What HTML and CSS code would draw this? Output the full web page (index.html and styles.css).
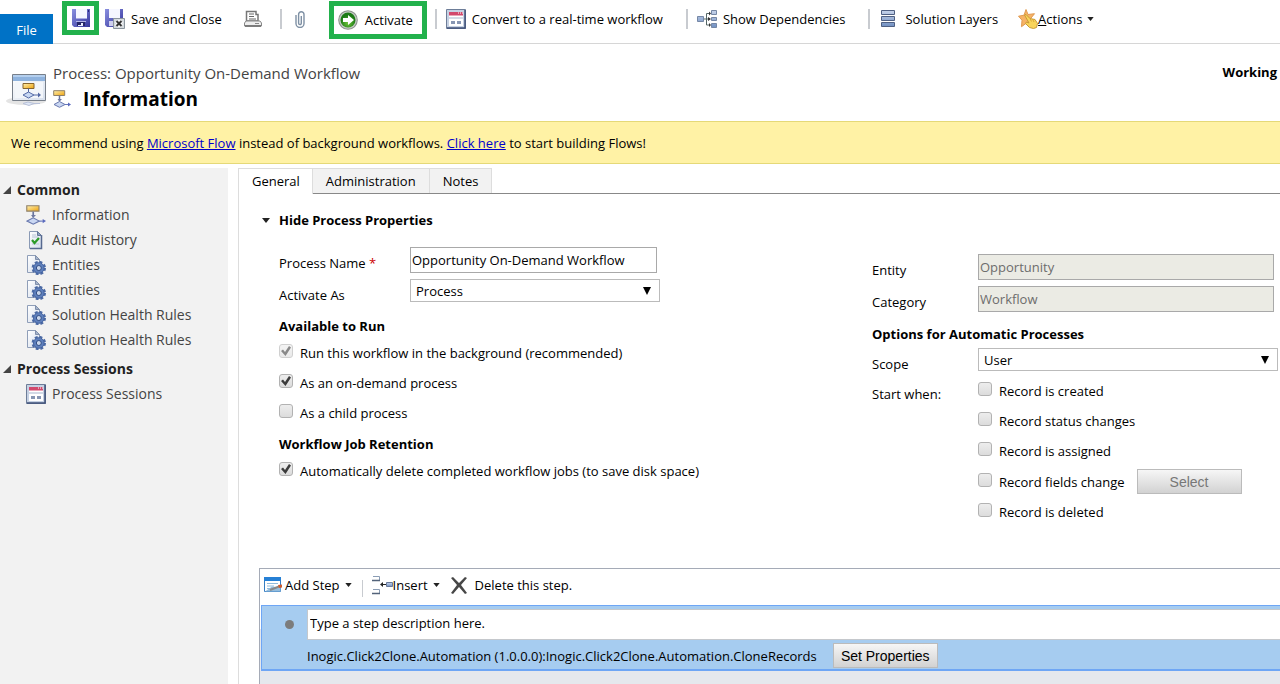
FILE: index.html
```html
<!DOCTYPE html>
<html lang="en">
<head>
<meta charset="utf-8">
<title>Process: Opportunity On-Demand Workflow</title>
<link rel="stylesheet" href="styles.css">
</head>
<body>
<svg class="sprite" aria-hidden="true">
  <defs>
    <linearGradient id="g-blue" x2="1" y2="1"><stop stop-color="#8a90e0"/><stop offset="1" stop-color="#35359c"/></linearGradient>
    <linearGradient id="g-gold" x2="1" y2="1"><stop stop-color="#fff0b0"/><stop offset="1" stop-color="#eda20c"/></linearGradient>
    <linearGradient id="g-page" x2="1" y2="1"><stop stop-color="#fff"/><stop offset="1" stop-color="#d5deec"/></linearGradient>
    <linearGradient id="g-bar" x2="0" y2="1"><stop stop-color="#c6d3ea"/><stop offset="1" stop-color="#7190c2"/></linearGradient>
    <radialGradient id="g-green" cy=".7"><stop stop-color="#6fc63a"/><stop offset="1" stop-color="#1c7a16"/></radialGradient>
    <symbol id="disk" viewBox="0 0 18 18">
      <path d="M0 0h18v18H2l-2-2z" fill="url(#g-blue)"/><path d="M4 0h11v9H4z" fill="#f5f6ff"/><path d="M4 9h11v1H4z" fill="#a9abe3"/>
      <path d="M5 12h8v5H5z" fill="#26266a"/><path d="M6 16h3v-2h2v3H6z" fill="#eceeff"/><path d="M4 12h10v1H4z" fill="#b5b7e8"/><path d="M16 1h1v2h-1z" fill="#25257c"/>
    </symbol>
    <symbol id="disk-close" viewBox="0 0 20 20">
      <path d="M0 0h18v18H2l-2-2z" fill="url(#g-blue)"/><path d="M4 0h11v9H4z" fill="#f5f6ff"/><path d="M4 12h8v5H4z" fill="#cfd0f0"/>
      <path d="M8.500 9.500h11v10h-11z" fill="#d5dade" stroke="#8a949c"/><path d="M11.500 12l5 5m0-5l-5 5" stroke="#fff" stroke-width="4"/><path d="M11.500 12l5 5m0-5l-5 5" stroke="#333" stroke-width="2"/>
    </symbol>
    <symbol id="printer" viewBox="0 0 18 17">
      <path d="M2.500 1h9.500v3h2v6.500H2.500z" fill="#fff" stroke="#777" stroke-width="1.500"/><path d="M5 3.500h5m-5 2.500h5m-5 2.500h7" stroke="#666" stroke-width="1.200"/>
      <path d="M2 10.500h14l1.500 2v3H.5v-3z" fill="#eee" stroke="#888"/><path d="M1 15.500h16" stroke="#666" stroke-width="1.500"/><path d="M11 13h4" stroke="#888"/>
    </symbol>
    <symbol id="clip" viewBox="0 0 10 17">
      <path d="M1 4v8.500a3.500 3.500 0 0 0 8 0V3.500a2.600 2.600 0 0 0-5.400 0v8.700a1.300 1.300 0 0 0 2.700 0V5" fill="none" stroke="#7e90a4" stroke-width="1.400"/>
    </symbol>
    <symbol id="go" viewBox="0 0 20 20">
      <circle cx="10" cy="10" r="9.800" fill="#8b918b"/><circle cx="10" cy="10" r="8.800" fill="#c2c9c2"/><circle cx="10" cy="10" r="7.500" fill="url(#g-green)"/>
      <path d="M5 8h5V5l6 5-6 5v-3H5z" fill="#fff"/>
    </symbol>
    <symbol id="form" viewBox="0 0 20 20">
      <path d="M.5.5h19v19H.5z" fill="#c6d1e3" stroke="#6d7d98"/><path d="M19 1v18H1" fill="none" stroke="#40527a" stroke-width="1.500"/>
      <path d="M3 3h14v14H3z" fill="#fff"/><path d="M3 3h14v3.500H3z" fill="#d2486c"/><path d="M12 4h1m1 0h1m1 0h1" stroke="#fff"/><path d="M3 9h14" stroke="#d3dae6" stroke-width="2"/>
      <path d="M5 12h4v3H5zm6 0h4v3h-4z" fill="#8796b3"/>
    </symbol>
    <symbol id="deps" viewBox="0 0 20 18">
      <g fill="url(#g-bar)" stroke="#7587a5"><path d="M.5 6.500h6v5h-6zM14.500.5h5v4h-5zM14.500 7.500h5v3h-5zM14.500 13.500h5v4h-5z"/></g>
      <path d="M7 9h6M9.500 9V3.500h3M9.500 9v6h3" fill="none" stroke="#566"/><path d="M11 7l3 2-3 2zM12 1.500l2 2-2 2zM12 13l2 2-2 2z" fill="#333"/>
    </symbol>
    <symbol id="layers" viewBox="0 0 14 18"><g fill="url(#g-bar)" stroke="#4f6083"><path d="M.5.5h13v4H.5zM.5 6.500h13v4H.5zM.5 12.500h13v4H.5z"/></g></symbol>
    <symbol id="star" viewBox="0 0 20 20">
      <path d="M8 .5l2 5 6.500-.8-4 5 3 6-6.500-2-5.500 4 .5-6.500-3.500-4 5.500-1z" fill="#f6b366" stroke="#e09a52"/>
      <path d="M6.500 6l1.500-.5 4 4 5 1 2.500 4-1 4-3 1-4-1-4-4 1-1.500 2.500 1z" fill="#f8d45b" stroke="#c99a35"/><path d="M12 9.500l1.500 3m1-2.500l1.500 3" stroke="#d8a838" fill="none"/>
    </symbol>
    <symbol id="flow" viewBox="0 0 18 18">
      <path d="M.7.7h11v4.800H.7z" fill="url(#g-gold)" stroke="#8f8068"/><path d="M6.500 6v5" stroke="#69749d" stroke-width="1.500"/>
      <path d="M1 14.500l5.500-3 5.500 3-5.500 2.800z" fill="#cad7f2" stroke="#6878ae"/><path d="M12 14.500h4" stroke="#6878bd"/><path d="M15 12.500l3 2-3 2z" fill="#5969bd"/><path d="M4.500 9l2 2.500L9 9z" fill="#6e78a0"/>
    </symbol>
    <symbol id="process" viewBox="0 0 40 34">
      <ellipse cx="20" cy="27" rx="20" ry="4" fill="#e4e4e4"/><path d="M6.500.5h33v26h-33z" fill="url(#g-page)" stroke="#777f8a"/><path d="M7 1h32v6H7z" fill="#8fb3de"/><path d="M7 1h32v2H7z" fill="#b4cfee"/>
      <path d="M9 8h28v16H9z" fill="#f3f6fa"/><path d="M17 9.500h11v5H17z" fill="url(#g-gold)" stroke="#86652e"/><path d="M22.500 14.500v4" stroke="#53679d"/>
      <path d="M17 21l5.500-3 5.500 3-5.500 3z" fill="#c8d8f3" stroke="#5369a5"/><path d="M28 21h5" stroke="#5369a5"/><path d="M32 18.500l3 2.500-3 2.500z" fill="#5369a5"/>
      <path d="M17 29.500l5-1.500 6 1.500-5 2zm11 0h6" fill="#dfe7f5" stroke="#b8c1d9"/>
    </symbol>
    <symbol id="audit" viewBox="0 0 20 20">
      <path d="M3.500 1.500h8l4 4v13h-12z" fill="url(#g-page)" stroke="#8a9ab5"/><path d="M15.500 5v13.500H4" fill="none" stroke="#56698f" stroke-width="1.500"/><path d="M11.500 1.500v4h4z" fill="#8fa1bd" stroke="#65789b"/><path d="M6 5h4M6 7h6M6 14h7" stroke="#b9c5d7"/>
      <path d="M6 10l2.500 3L13 8" fill="none" stroke="#2c9b28" stroke-width="2.200"/>
    </symbol>
    <symbol id="entity" viewBox="0 0 20 20">
      <path d="M1.500.5h8l4 4v13h-12z" fill="url(#g-page)" stroke="#8f9eb8"/><path d="M9.500.5v4h4z" fill="#a7b5cb" stroke="#8090ad"/>
      <circle cx="12.800" cy="13" r="6.200" fill="none" stroke="#4d6ba5" stroke-width="2" stroke-dasharray="2.900 1.970"/><circle cx="12.800" cy="13" r="5.300" fill="#5f80bd" stroke="#41619f"/><circle cx="12.800" cy="13" r="2.500" fill="#c9d6ec" stroke="#2f4c83"/>
    </symbol>
    <symbol id="step" viewBox="0 0 18 16">
      <path d="M.5.5h16v14H.5z" fill="#fff" stroke="#347dc2"/><path d="M0 0h17v4H0z" fill="#2680d5"/><path d="M3 6.500h11M3 9h7M3 11.500h4" stroke="#8fbbdc"/><path d="M1 14.500l7-5 8.500 1v4z" fill="#95bddd"/>
      <path d="M6 13l9-3.500" stroke="#888" stroke-width="2"/><path d="M14 8l4-.5v3l-3 .5z" fill="#cf5c2e"/>
    </symbol>
    <symbol id="insert" viewBox="0 0 21 20">
      <path d="M1 1.500h6.500v4H1M1 14.500h6.500v4H1" fill="#fff" stroke="#8a9cb4"/><path d="M0 5.500h8M0 18.500h8" stroke="#53637a" stroke-width="1.500"/><path d="M14.500 7.500h6v4h-6z" fill="url(#g-bar)" stroke="#68799a"/><path d="M9 9.500h5" stroke="#222"/><path d="M8 9.500l3-2.500v5z" fill="#222"/>
    </symbol>
    <symbol id="cross" viewBox="0 0 16 17"><path d="M0 1l2-1 6 6 6-6 2 1-6 7 6 8-2 1-6-7-6 7-2-1 6-8z" fill="#474747"/></symbol>
    <symbol id="down" viewBox="0 0 8 5"><path d="M0 0h8L4 5z" fill="#222"/></symbol>
    <symbol id="fold" viewBox="0 0 8 8"><path d="M8 0v8H0z" fill="#444"/></symbol>
    <symbol id="select-arrow" viewBox="0 0 8 8"><path d="M0 0h8L4 8z" fill="#000"/></symbol>
  </defs>
</svg>

<header class="ribbon">
  <button class="file-tab">File</button>
  <div class="tools">
    <button class="tool marked save" aria-label="Save"><svg class="i18"><use href="#disk"/></svg></button>
    <button class="tool save-close"><svg class="i20"><use href="#disk-close"/></svg>Save and Close</button>
    <button class="tool print" aria-label="Print"><svg class="i18"><use href="#printer"/></svg></button>
    <span class="rule"></span>
    <button class="tool attach" aria-label="Attach"><svg class="i-clip"><use href="#clip"/></svg></button>
    <span class="rule tight"></span>
    <button class="tool marked activate"><svg class="i20"><use href="#go"/></svg>Activate</button>
    <span class="rule"></span>
    <button class="tool convert"><svg class="i20"><use href="#form"/></svg>Convert to a real-time workflow</button>
    <span class="rule"></span>
    <button class="tool deps"><svg class="i20"><use href="#deps"/></svg>Show Dependencies</button>
    <span class="rule"></span>
    <button class="tool layers"><svg class="i-layers"><use href="#layers"/></svg>Solution Layers</button>
    <button class="tool actions"><svg class="i20"><use href="#star"/></svg><span><u>A</u>ctions</span><svg class="i-down"><use href="#down"/></svg></button>
  </div>
</header>

<section class="title-bar">
  <svg class="i-process"><use href="#process"/></svg>
  <div class="titles">
    <div class="record">Process: Opportunity On-Demand Workflow</div>
    <h1 class="page-title"><svg class="i18"><use href="#flow"/></svg>Information</h1>
  </div>
  <div class="status">Working</div>
</section>

<div class="notice">We recommend using <a href="#flow-home">Microsoft Flow</a> instead of background workflows. <a href="#flow-start">Click here</a> to start building Flows!</div>

<div class="body">
  <nav class="sidebar">
    <h2 class="nav-head"><svg class="i-fold"><use href="#fold"/></svg>Common</h2>
    <a class="nav-link" href="#information"><svg class="i20"><use href="#flow"/></svg>Information</a>
    <a class="nav-link" href="#audit-history"><svg class="i20"><use href="#audit"/></svg>Audit History</a>
    <a class="nav-link" href="#entities"><svg class="i20"><use href="#entity"/></svg>Entities</a>
    <a class="nav-link" href="#entities-2"><svg class="i20"><use href="#entity"/></svg>Entities</a>
    <a class="nav-link" href="#health"><svg class="i20"><use href="#entity"/></svg>Solution Health Rules</a>
    <a class="nav-link" href="#health-2"><svg class="i20"><use href="#entity"/></svg>Solution Health Rules</a>
    <h2 class="nav-head second"><svg class="i-fold"><use href="#fold"/></svg>Process Sessions</h2>
    <a class="nav-link" href="#sessions"><svg class="i20"><use href="#form"/></svg>Process Sessions</a>
  </nav>

  <main class="main">
    <div class="tabs" role="tablist">
      <button class="tab current" role="tab" aria-selected="true">General</button>
      <button class="tab" role="tab">Administration</button>
      <button class="tab" role="tab">Notes</button>
    </div>

    <button class="collapse"><svg class="i-collapse"><use href="#down"/></svg>Hide Process Properties</button>

    <div class="properties">
      <div class="left">
        <div class="field"><label for="name">Process Name <span class="required">*</span></label><input class="text name" id="name" type="text" value="Opportunity On-Demand Workflow"></div>
        <div class="field select-field"><label for="as">Activate As</label><span class="select-box short"><select id="as"><option>Process</option></select><svg class="i-select"><use href="#select-arrow"/></svg></span></div>
        <h3 class="group">Available to Run</h3>
        <label class="check"><input type="checkbox" checked disabled>Run this workflow in the background (recommended)</label>
        <label class="check"><input type="checkbox" checked>As an on-demand process</label>
        <label class="check"><input type="checkbox">As a child process</label>
        <h3 class="group">Workflow Job Retention</h3>
        <label class="check"><input type="checkbox" checked>Automatically delete completed workflow jobs (to save disk space)</label>
      </div>
      <div class="right">
        <div class="field"><label for="entity-name">Entity</label><input class="text" id="entity-name" type="text" value="Opportunity" disabled></div>
        <div class="field"><label for="category">Category</label><input class="text" id="category" type="text" value="Workflow" disabled></div>
        <h3 class="group">Options for Automatic Processes</h3>
        <div class="field select-field"><label for="scope">Scope</label><span class="select-box"><select id="scope"><option>User</option></select><svg class="i-select"><use href="#select-arrow"/></svg></span></div>
        <div class="start">
          <div class="start-label">Start when:</div>
          <div class="triggers">
            <label class="check"><input type="checkbox">Record is created</label>
            <label class="check"><input type="checkbox">Record status changes</label>
            <label class="check"><input type="checkbox">Record is assigned</label>
            <div class="with-button"><label class="check"><input type="checkbox">Record fields change</label><button class="push pick" disabled>Select</button></div>
            <label class="check"><input type="checkbox">Record is deleted</label>
          </div>
        </div>
      </div>
    </div>

    <section class="designer">
      <div class="designer-bar">
        <button class="tool"><svg class="i-step"><use href="#step"/></svg>Add Step<svg class="i-down"><use href="#down"/></svg></button>
        <span class="rule"></span>
        <button class="tool insert"><svg class="i-insert"><use href="#insert"/></svg>Insert<svg class="i-down"><use href="#down"/></svg></button>
        <button class="tool delete"><svg class="i-cross"><use href="#cross"/></svg>Delete this step.</button>
      </div>
      <div class="step">
        <span class="dot"></span>
        <input class="step-text" type="text" aria-label="Step description" value="Type a step description here.">
        <div class="step-action"><span>Inogic.Click2Clone.Automation (1.0.0.0):Inogic.Click2Clone.Automation.CloneRecords</span><button class="push set">Set Properties</button></div>
      </div>
    </section>
  </main>
</div>
</body>
</html>
```
FILE: styles.css
```css
* { box-sizing: border-box; }
body { margin: 0; min-height: 100vh; display: flex; flex-direction: column; background: #fff; color: #000; font: 13px/20px "Open Sans", "Noto Sans", sans-serif; overflow: hidden; }
button, input, select { font: inherit; color: inherit; }
button { border: 0; background: none; padding: 0; white-space: nowrap; }
h1, h2, h3 { margin: 0; }
svg { display: block; flex: none; }
.sprite { position: absolute; width: 0; height: 0; }

.i18 { width: 18px; height: 18px; }
.i20 { width: 20px; height: 20px; }
.i-clip { width: 10px; height: 17px; }
.i-layers { width: 14px; height: 18px; }
.i-down { width: 7px; height: 4px; }
.i-process { width: 40px; height: 34px; }
.i-fold { width: 8px; height: 8px; }
.i-collapse { width: 10px; height: 5px; }
.i-select { width: 8px; height: 8px; }
.i-step { width: 18px; height: 16px; }
.i-insert { width: 21px; height: 20px; }
.i-cross { width: 16px; height: 17px; }

.ribbon { display: flex; align-items: flex-end; height: 44px; border-bottom: 1px solid #d6d6d6; }
.file-tab { width: 53px; height: 30px; background: #0072c6; color: #fff; padding-top: 2px; margin-bottom: -1px; }
.tools { display: flex; align-items: center; align-self: flex-start; height: 38px; padding-left: 9px; }
.tool { display: flex; align-items: center; gap: 6px; }
.marked { border: 5px solid #22b14c; }
.save { width: 37px; height: 34px; justify-content: center; margin-bottom: 2px; }
.save-close { margin-left: 6px; }
.print { margin-left: 22px; }
.rule { width: 2px; height: 20px; background: #c8cbd0; margin-left: 18px; }
.attach { margin-left: 13px; }
.tight { margin-left: 24px; margin-right: -2px; }
.activate { width: 98px; height: 38px; padding-left: 4px; gap: 7px; }
.tools .activate { margin-top: 2px; }
.activate + .rule { margin-left: 8px; }
.convert, .deps { margin-left: 9px; }
.convert + .rule, .deps + .rule { margin-left: 23px; }
.layers { margin-left: 11px; gap: 10px; }
.actions { margin-left: 20px; gap: 0; }
.actions .i-down { margin-left: 5px; }

.title-bar { display: flex; align-items: flex-start; height: 77px; padding: 19px 3px 0 6px; }
.i-process { margin-top: 11px; }
.titles { margin-left: 7px; }
.record { font-size: 15px; color: #444; }
.page-title { display: flex; align-items: center; gap: 12px; font-size: 19px; line-height: 32px; font-weight: 700; }
.status { margin-left: auto; font-weight: 700; line-height: 18px; }

.notice { padding: 11px 11px 9px; line-height: 21px; background: #fff2a5; border: solid #e5d978; border-width: 1px 0; }
.notice a { color: #00c; }

.body { display: flex; flex: 1; padding-top: 4px; }
.sidebar { width: 228px; flex: none; background: #f2f2f2; padding: 10px 0 0 3px; color: #444; font-size: 14px; }
.nav-head { display: flex; align-items: center; gap: 6px; height: 24px; color: #222; font-size: 14px; font-weight: 700; }
.second { margin-top: 5px; }
.nav-link { display: flex; align-items: center; gap: 6px; height: 25px; padding-left: 23px; color: inherit; text-decoration: none; }

.main { flex: 1; min-width: 0; margin-left: 10px; border-left: 1px solid #ddd; }
.tabs { display: flex; height: 26px; border-bottom: 1px solid #888; }
.tab { height: 25px; padding: 0 13px; background: #f2f2f2; border: solid #ddd; border-width: 1px 1px 0 0; }
.current { height: 26px; padding: 0 12px 1px 13px; background: #fff; }

.collapse { display: flex; align-items: center; gap: 8px; height: 20px; margin: 16px 0 17px 22px; font-weight: 700; }
.properties { display: grid; grid-template-columns: 593fr 408fr; padding-left: 40px; }
.field { display: grid; grid-template-columns: 131px 1fr; height: 32px; line-height: 32px; }
.required { color: #c00; }
.text { height: 26px; padding: 0 1px; border: 1px solid #a9a9a9; background: #fff; width: 100%; }
.text:disabled { background: #ebebe4; color: #6d6d6d; }
.name { width: 247px; }
.select-field { height: 31px; }
.select-box { display: grid; align-items: center; height: 23px; border: 1px solid #bbb; }
.select-box > * { grid-area: 1 / 1; }
.short { width: 250px; }
.select-box select { appearance: none; width: 100%; height: 21px; line-height: 20px; padding: 0 5px; border: 0; background: none; }
.i-select { justify-self: end; margin-right: 8px; pointer-events: none; }
.group { margin-top: 2px; font-size: 13px; line-height: 28px; font-weight: 700; }
.check { display: flex; align-items: center; gap: 7px; height: 26px; margin-bottom: 4px; }
.check input { appearance: none; width: 14px; height: 14px; margin: 0 0 4px; flex: none; border: 1px solid #b2b2b2; border-radius: 3px; background: linear-gradient(#ededed, #dcdcdc); }
.check input:checked::after { content: ""; display: block; width: 10px; height: 10px; margin: 1px; background: #3c3c3c; clip-path: polygon(0 50%, 20% 35%, 40% 60%, 80% 0, 100% 15%, 45% 100%); }
.check input:disabled { opacity: .6; }
.right { padding-top: 7px; }
.right .field { grid-template-columns: 106px 1fr; padding-right: 6px; }
.right .select-field { padding-right: 2px; height: 28px; }
.start { display: grid; grid-template-columns: 106px 1fr; margin-top: 2px; }
.start-label { line-height: 32px; }
.with-button { display: flex; align-items: center; gap: 12px; height: 27px; margin-bottom: 4px; }
.with-button .check { margin: 0; }
.push { border: 1px solid #bbb; background: linear-gradient(#f6f6f6, #d2d2d2); font-family: "Liberation Sans", Arial, sans-serif; font-size: 14px; }
.pick { width: 105px; height: 25px; color: #777; }

.designer { margin: 39px 0 0 20px; border: solid #a5abb7; border-width: 1px 0 0 1px; padding-left: 1px; min-height: 116px; background: linear-gradient(#fff 60px, #e5e8ed 60px); }
.designer-bar { display: flex; align-items: center; height: 36px; padding: 0 0 4px 3px; }
.designer-bar .tool { gap: 3px; }
.designer-bar .rule { margin: 6px 9px 0 10px; width: 1px; height: 17px; }
.designer-bar .insert { gap: 0; }
.designer-bar .i-down { margin-left: 2px; }
.designer-bar .insert .i-down { margin-left: 5px; }
.designer-bar .delete { gap: 8px; margin-left: 11px; }
.step { display: grid; grid-template-columns: 45px 1fr; height: 66px; background: #a6ccf0; border: solid #6ea6f5; border-width: 1px 0 2px 1px; padding-top: 3px; }
.dot { width: 9px; height: 9px; margin: 11px 0 0 23px; border-radius: 50%; background: #7c7c7c; }
.step-text { width: 100%; height: 31px; padding: 0 2px 4px; border: 1px solid #c5c8cc; border-right: 0; background: #fff; }
.step-action { grid-column: 2; display: flex; align-items: center; gap: 16px; height: 29px; padding-top: 2px; }
.set { width: 105px; height: 25px; }
```
